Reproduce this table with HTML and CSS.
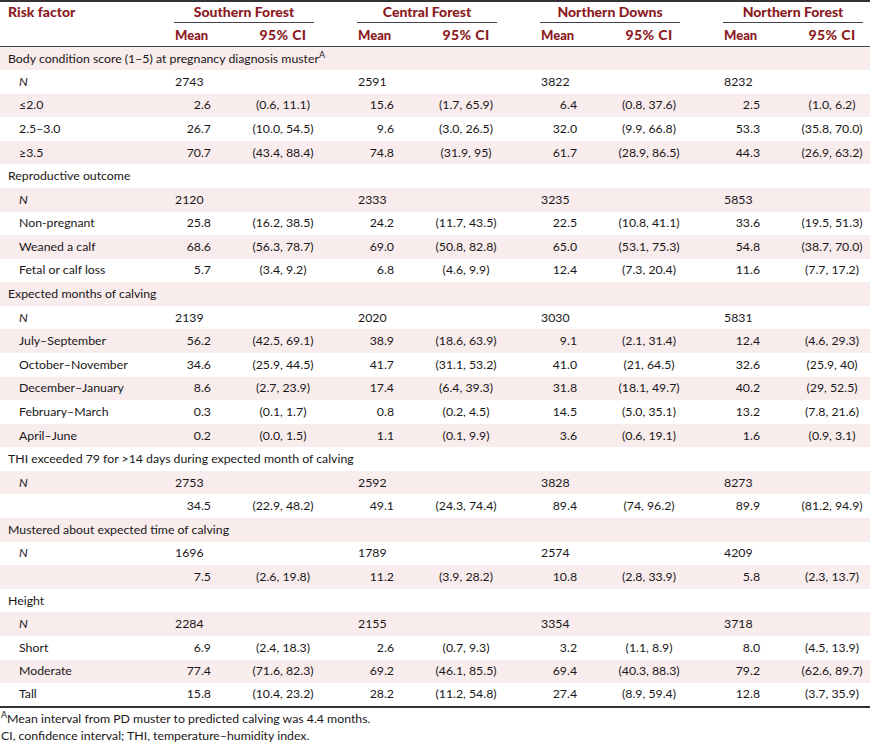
FILE: index.html
```html
<!DOCTYPE html>
<html>
<head>
<meta charset="utf-8">
<link rel="stylesheet" href="styles.css">
</head>
<body>
<table class="data">
<colgroup>
<col class="c-risk"><col class="c-mean"><col class="c-ci"><col class="c-gap">
<col class="c-mean"><col class="c-ci"><col class="c-gap">
<col class="c-mean"><col class="c-ci"><col class="c-gap">
<col class="c-mean"><col class="c-ci"><col class="c-end">
</colgroup>
<thead>
<tr class="h1">
<th class="risk" rowspan="2">Risk factor</th>
<th colspan="2" class="grp"><span>Southern Forest</span></th><th></th>
<th colspan="2" class="grp"><span>Central Forest</span></th><th></th>
<th colspan="2" class="grp"><span>Northern Downs</span></th><th></th>
<th colspan="2" class="grp"><span>Northern Forest</span></th><th></th>
</tr>
<tr class="h2">
<th class="mh">Mean</th><th class="cih">95% CI</th><th></th>
<th class="mh">Mean</th><th class="cih">95% CI</th><th></th>
<th class="mh">Mean</th><th class="cih">95% CI</th><th></th>
<th class="mh">Mean</th><th class="cih">95% CI</th><th></th>
</tr>
</thead>
<tbody>
<tr class="sec"><td colspan="13">Body condition score (1–5) at pregnancy diagnosis muster<sup>A</sup></td></tr>
<tr><td class="lab"><i>N</i></td><td class="n" colspan="2">2743</td><td></td><td class="n" colspan="2">2591</td><td></td><td class="n" colspan="2">3822</td><td></td><td class="n" colspan="2">8232</td><td></td></tr>
<tr><td class="lab">≤2.0</td><td class="m">2.6</td><td class="ci">(0.6, 11.1)</td><td></td><td class="m">15.6</td><td class="ci">(1.7, 65.9)</td><td></td><td class="m">6.4</td><td class="ci">(0.8, 37.6)</td><td></td><td class="m">2.5</td><td class="ci">(1.0, 6.2)</td><td></td></tr>
<tr><td class="lab">2.5–3.0</td><td class="m">26.7</td><td class="ci">(10.0, 54.5)</td><td></td><td class="m">9.6</td><td class="ci">(3.0, 26.5)</td><td></td><td class="m">32.0</td><td class="ci">(9.9, 66.8)</td><td></td><td class="m">53.3</td><td class="ci">(35.8, 70.0)</td><td></td></tr>
<tr><td class="lab">≥3.5</td><td class="m">70.7</td><td class="ci">(43.4, 88.4)</td><td></td><td class="m">74.8</td><td class="ci">(31.9, 95)</td><td></td><td class="m">61.7</td><td class="ci">(28.9, 86.5)</td><td></td><td class="m">44.3</td><td class="ci">(26.9, 63.2)</td><td></td></tr>

<tr class="sec"><td colspan="13">Reproductive outcome</td></tr>
<tr><td class="lab"><i>N</i></td><td class="n" colspan="2">2120</td><td></td><td class="n" colspan="2">2333</td><td></td><td class="n" colspan="2">3235</td><td></td><td class="n" colspan="2">5853</td><td></td></tr>
<tr><td class="lab">Non-pregnant</td><td class="m">25.8</td><td class="ci">(16.2, 38.5)</td><td></td><td class="m">24.2</td><td class="ci">(11.7, 43.5)</td><td></td><td class="m">22.5</td><td class="ci">(10.8, 41.1)</td><td></td><td class="m">33.6</td><td class="ci">(19.5, 51.3)</td><td></td></tr>
<tr><td class="lab">Weaned a calf</td><td class="m">68.6</td><td class="ci">(56.3, 78.7)</td><td></td><td class="m">69.0</td><td class="ci">(50.8, 82.8)</td><td></td><td class="m">65.0</td><td class="ci">(53.1, 75.3)</td><td></td><td class="m">54.8</td><td class="ci">(38.7, 70.0)</td><td></td></tr>
<tr><td class="lab">Fetal or calf loss</td><td class="m">5.7</td><td class="ci">(3.4, 9.2)</td><td></td><td class="m">6.8</td><td class="ci">(4.6, 9.9)</td><td></td><td class="m">12.4</td><td class="ci">(7.3, 20.4)</td><td></td><td class="m">11.6</td><td class="ci">(7.7, 17.2)</td><td></td></tr>

<tr class="sec"><td colspan="13">Expected months of calving</td></tr>
<tr><td class="lab"><i>N</i></td><td class="n" colspan="2">2139</td><td></td><td class="n" colspan="2">2020</td><td></td><td class="n" colspan="2">3030</td><td></td><td class="n" colspan="2">5831</td><td></td></tr>
<tr><td class="lab">July–September</td><td class="m">56.2</td><td class="ci">(42.5, 69.1)</td><td></td><td class="m">38.9</td><td class="ci">(18.6, 63.9)</td><td></td><td class="m">9.1</td><td class="ci">(2.1, 31.4)</td><td></td><td class="m">12.4</td><td class="ci">(4.6, 29.3)</td><td></td></tr>
<tr><td class="lab">October–November</td><td class="m">34.6</td><td class="ci">(25.9, 44.5)</td><td></td><td class="m">41.7</td><td class="ci">(31.1, 53.2)</td><td></td><td class="m">41.0</td><td class="ci">(21, 64.5)</td><td></td><td class="m">32.6</td><td class="ci">(25.9, 40)</td><td></td></tr>
<tr><td class="lab">December–January</td><td class="m">8.6</td><td class="ci">(2.7, 23.9)</td><td></td><td class="m">17.4</td><td class="ci">(6.4, 39.3)</td><td></td><td class="m">31.8</td><td class="ci">(18.1, 49.7)</td><td></td><td class="m">40.2</td><td class="ci">(29, 52.5)</td><td></td></tr>
<tr><td class="lab">February–March</td><td class="m">0.3</td><td class="ci">(0.1, 1.7)</td><td></td><td class="m">0.8</td><td class="ci">(0.2, 4.5)</td><td></td><td class="m">14.5</td><td class="ci">(5.0, 35.1)</td><td></td><td class="m">13.2</td><td class="ci">(7.8, 21.6)</td><td></td></tr>
<tr><td class="lab">April–June</td><td class="m">0.2</td><td class="ci">(0.0, 1.5)</td><td></td><td class="m">1.1</td><td class="ci">(0.1, 9.9)</td><td></td><td class="m">3.6</td><td class="ci">(0.6, 19.1)</td><td></td><td class="m">1.6</td><td class="ci">(0.9, 3.1)</td><td></td></tr>

<tr class="sec"><td colspan="13">THI exceeded 79 for &gt;14 days during expected month of calving</td></tr>
<tr><td class="lab"><i>N</i></td><td class="n" colspan="2">2753</td><td></td><td class="n" colspan="2">2592</td><td></td><td class="n" colspan="2">3828</td><td></td><td class="n" colspan="2">8273</td><td></td></tr>
<tr><td class="lab"></td><td class="m">34.5</td><td class="ci">(22.9, 48.2)</td><td></td><td class="m">49.1</td><td class="ci">(24.3, 74.4)</td><td></td><td class="m">89.4</td><td class="ci">(74, 96.2)</td><td></td><td class="m">89.9</td><td class="ci">(81.2, 94.9)</td><td></td></tr>

<tr class="sec"><td colspan="13">Mustered about expected time of calving</td></tr>
<tr><td class="lab"><i>N</i></td><td class="n" colspan="2">1696</td><td></td><td class="n" colspan="2">1789</td><td></td><td class="n" colspan="2">2574</td><td></td><td class="n" colspan="2">4209</td><td></td></tr>
<tr><td class="lab"></td><td class="m">7.5</td><td class="ci">(2.6, 19.8)</td><td></td><td class="m">11.2</td><td class="ci">(3.9, 28.2)</td><td></td><td class="m">10.8</td><td class="ci">(2.8, 33.9)</td><td></td><td class="m">5.8</td><td class="ci">(2.3, 13.7)</td><td></td></tr>

<tr class="sec"><td colspan="13">Height</td></tr>
<tr><td class="lab"><i>N</i></td><td class="n" colspan="2">2284</td><td></td><td class="n" colspan="2">2155</td><td></td><td class="n" colspan="2">3354</td><td></td><td class="n" colspan="2">3718</td><td></td></tr>
<tr><td class="lab">Short</td><td class="m">6.9</td><td class="ci">(2.4, 18.3)</td><td></td><td class="m">2.6</td><td class="ci">(0.7, 9.3)</td><td></td><td class="m">3.2</td><td class="ci">(1.1, 8.9)</td><td></td><td class="m">8.0</td><td class="ci">(4.5, 13.9)</td><td></td></tr>
<tr><td class="lab">Moderate</td><td class="m">77.4</td><td class="ci">(71.6, 82.3)</td><td></td><td class="m">69.2</td><td class="ci">(46.1, 85.5)</td><td></td><td class="m">69.4</td><td class="ci">(40.3, 88.3)</td><td></td><td class="m">79.2</td><td class="ci">(62.6, 89.7)</td><td></td></tr>
<tr><td class="lab">Tall</td><td class="m">15.8</td><td class="ci">(10.4, 23.2)</td><td></td><td class="m">28.2</td><td class="ci">(11.2, 54.8)</td><td></td><td class="m">27.4</td><td class="ci">(8.9, 59.4)</td><td></td><td class="m">12.8</td><td class="ci">(3.7, 35.9)</td><td></td></tr>
</tbody>
</table>
<div class="notes">
<p><sup>A</sup>Mean interval from PD muster to predicted calving was 4.4 months.</p>
<p>CI, confidence interval; THI, temperature–humidity index.</p>
</div>
</body>
</html>
```
FILE: styles.css
```css
html, body {
  margin: 0;
  padding: 0;
  background: #fff;
}
body {
  font-family: "Lato", "Liberation Sans", sans-serif;
  font-size: 12.3px;
  color: #1a1718;
}
.data {
  width: 870px;
  border-collapse: collapse;
  table-layout: fixed;
  border-top: 2px solid #333;
  border-bottom: 2px solid #333;
}
.c-risk { width: 174px; }
.c-mean { width: 37px; }
.c-ci { width: 103px; }
.c-gap { width: 43px; }
.c-end { width: 7px; }
th, td {
  padding: 0;
  white-space: nowrap;
  line-height: 16px;
}
thead th {
  color: #8b1a22;
  font-weight: 900;
  text-align: left;
  font-size: 14px;
}
thead tr.h2 th {
  border-bottom: 1px solid #444;
}
.h1 th { height: 20px; vertical-align: top; padding-top: 2px; }
.h2 th { height: 22px; vertical-align: middle; }
th.risk { padding-left: 8px; vertical-align: top; border-bottom: 1px solid #444; }
th.grp { text-align: center; }
th.grp span {
  display: block;
  border-bottom: 1px solid #444;
  padding-bottom: 2px;
}
th.mh { padding-left: 1px; font-size: 13px; }
th.cih { text-align: center; padding-left: 41px; letter-spacing: 0.4px; }
tbody tr { height: 23.58px; }
tbody tr:nth-child(odd) { background: #f8eced; }
tbody td { vertical-align: middle; }
tr.sec td { padding-left: 8px; }
td.lab { padding-left: 19px; }
td.n { padding-left: 1px; }
td.m { text-align: right; }
td.ci { text-align: center; padding-left: 41px; }
sup { font-size: 9px; line-height: 0; vertical-align: 5px; }
.notes { padding-top: 2px; padding-left: 1px; }
.notes p { margin: 0; line-height: 17px; }
```
